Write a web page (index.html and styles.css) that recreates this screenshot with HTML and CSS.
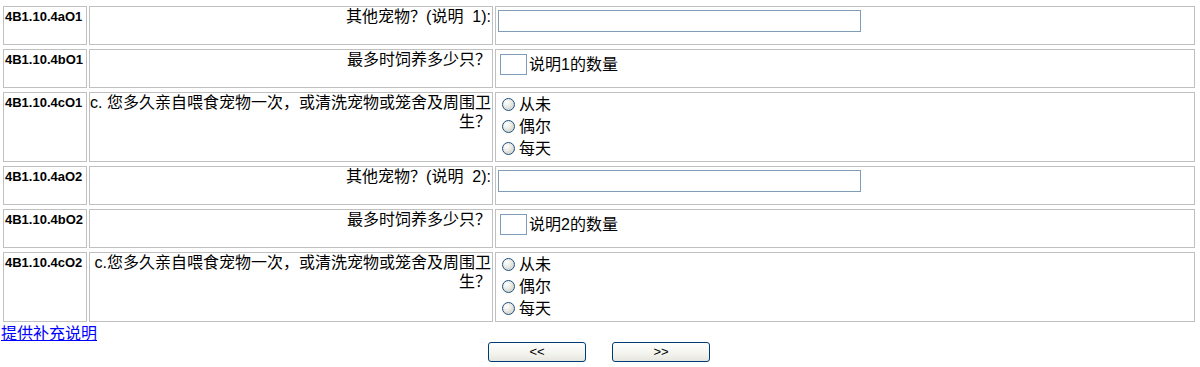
FILE: index.html
```html
<!DOCTYPE html>
<html lang="zh-CN">
<head>
  <meta charset="UTF-8" />
  <title>4B1.10.4 其他宠物</title>
  <link rel="stylesheet" href="styles.css">
</head>
<body>
  <form class="survey-form">
    <div class="survey">
      <!-- 其他宠物 1 -->
      <div class="cell code">4B1.10.4aO1</div>
      <div class="cell question">其他宠物？(说明&nbsp; 1):</div>
      <div class="cell answer"><input type="text" class="text-wide"></div>

      <div class="cell code">4B1.10.4bO1</div>
      <div class="cell question">最多时饲养多少只？</div>
      <div class="cell answer">
        <div class="count"><input type="text" class="text-short"><span>说明1的数量</span></div>
      </div>

      <div class="cell code">4B1.10.4cO1</div>
      <div class="cell question">c. 您多久亲自喂食宠物一次，或清洗宠物或笼舍及周围卫生？</div>
      <div class="cell answer">
        <label class="choice"><input type="radio" name="c1">从未</label>
        <label class="choice"><input type="radio" name="c1">偶尔</label>
        <label class="choice"><input type="radio" name="c1">每天</label>
      </div>

      <!-- 其他宠物 2 -->
      <div class="cell code">4B1.10.4aO2</div>
      <div class="cell question">其他宠物？(说明&nbsp; 2):</div>
      <div class="cell answer"><input type="text" class="text-wide"></div>

      <div class="cell code">4B1.10.4bO2</div>
      <div class="cell question">最多时饲养多少只？</div>
      <div class="cell answer">
        <div class="count"><input type="text" class="text-short"><span>说明2的数量</span></div>
      </div>

      <div class="cell code">4B1.10.4cO2</div>
      <div class="cell question">c.您多久亲自喂食宠物一次，或清洗宠物或笼舍及周围卫生？</div>
      <div class="cell answer">
        <label class="choice"><input type="radio" name="c2">从未</label>
        <label class="choice"><input type="radio" name="c2">偶尔</label>
        <label class="choice"><input type="radio" name="c2">每天</label>
      </div>
    </div>

    <a href="#" class="note-link">提供补充说明</a>

    <div class="nav">
      <button type="button" class="nav-btn">&lt;&lt;</button>
      <button type="button" class="nav-btn">&gt;&gt;</button>
    </div>
  </form>
</body>
</html>
```

FILE: styles.css
```css
*{box-sizing:border-box;}
html,body{margin:0;padding:0;background:#fff;color:#000;
  font-family:"Liberation Sans","Noto Sans CJK SC",sans-serif;}

.survey-form{padding:6px 0 0 3px;}

/* question grid */
.survey{display:grid;
  grid-template-columns:84px 404px 700px;
  grid-template-rows:39px 39px 70px 39px 39px 70px;
  gap:4px 2px;}

.cell{border:1px solid #c0c0c0;}

.code{padding:2px 1px;
  font-size:13px;
  font-weight:bold;
  line-height:15px;}

.question{padding:0 1px 0 0;
  text-align:right;
  font-size:16px;
  line-height:19px;}

.answer{padding:1px;
  font-size:16px;
  line-height:22px;}

.text-wide{display:block;
  width:363px;height:22px;
  margin:2px 0 0 1px;
  border:1px solid #7f9db9;
  padding:0 2px;
  font-size:13px;}

.count{display:flex;align-items:center;gap:2px;margin-top:3px;}
.text-short{width:27px;height:21px;
  margin:0 0 0 3px;
  border:1px solid #7f9db9;
  padding:0 2px;}
.count span{line-height:19px;}

.choice{display:block;height:22px;}
.choice input{appearance:none;-webkit-appearance:none;
  width:13px;height:13px;
  margin:0 4px 0 5px;
  vertical-align:-1px;
  border:1px solid #1c5180;
  border-radius:50%;
  background:radial-gradient(circle at 35% 30%,#fff 0,#eeeeea 35%,#c8c8c0 100%);}

.note-link{display:inline-block;
  margin:0 0 0 -2px;
  font-family:"Noto Sans CJK SC",sans-serif;
  font-size:16px;
  line-height:20px;
  color:#00f;}

.nav{display:flex;justify-content:center;gap:26px;margin:-1px 2px 0 -3px;}
.nav-btn{width:98px;height:20px;
  padding:0;
  border:1px solid #003c74;
  border-radius:3px;
  background:linear-gradient(#fefefd,#f3f3ee 60%,#e6e5de);
  font-family:"Liberation Sans",sans-serif;
  font-size:13px;
  line-height:18px;
  color:#000;}
```
